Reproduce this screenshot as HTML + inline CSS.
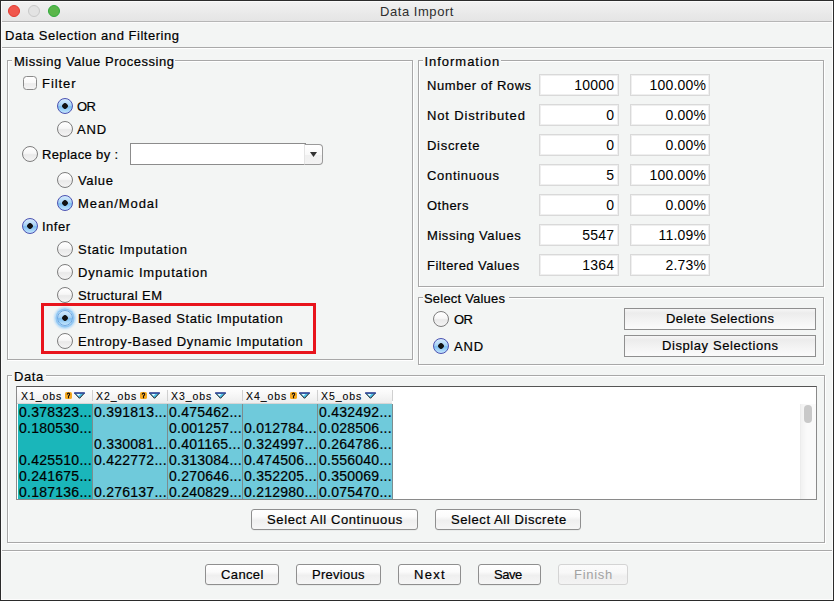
<!DOCTYPE html><html><head><meta charset="utf-8"><style>
*{margin:0;padding:0;box-sizing:border-box}
html,body{width:834px;height:601px;overflow:hidden;background:#f3f5f4}
body{position:relative;font-family:"Liberation Sans",sans-serif;color:#000}
.t{-webkit-text-stroke:0.2px currentColor}
.t.d{-webkit-text-stroke:0}
.t.d2{-webkit-text-stroke:0.2px currentColor}
.t.d3{-webkit-text-stroke:0.08px currentColor}
.t{position:absolute;white-space:pre;line-height:16px;font-size:13px}
.eg{position:absolute;border:1px solid #a8a8a8}
.ew{position:absolute;border:1px solid #ffffff}
.bg{position:absolute;background:#f3f5f4}
.rd{position:absolute;width:16px;height:16px;border-radius:50%;border:1px solid #7d7d7d;
 background:linear-gradient(#ffffff 0%,#f7f7f7 45%,#e9e9e9 55%,#f4f4f4 100%)}
.rd.sel{border-color:#4b52b2;background:radial-gradient(circle at 50% 50%,#111 0,#111 2.5px,transparent 3.1px),linear-gradient(#d4eafc 0%,#a9d4f6 45%,#7dbef1 55%,#c4e6fd 100%)}
.rd.foc{box-shadow:0 0 0 1.5px #8fc6f2,0 0 2px 3px #b9dcf8;border-color:#6ea6e0}
.btn{position:absolute;border:1px solid #8f8f8f;border-radius:3px;
 background:linear-gradient(#ffffff 0%,#fbfbfb 35%,#efefef 55%,#f6f6f6 100%);box-shadow:0 0.5px 0.5px rgba(0,0,0,.08)}
.sbtn{position:absolute;border:1px solid #8f8f8f;border-radius:0;
 background:linear-gradient(#f6f6f6 0%,#ececec 20%,#f3f3f3 55%,#fbfbfb 100%)}
.dbtn{position:absolute;border:1px solid #d4d4d4;border-radius:3px;background:linear-gradient(#fbfbfb,#f8f8f8 40%,#efefef 60%,#f3f3f3)}
.fld{position:absolute;border:1px solid #d9d9d9;background:#fff;box-shadow:inset 0 0 0 1px #efefef}
.num{position:absolute;white-space:pre;line-height:16px;font-size:14px;text-align:right}
</style></head><body>
<div style="position:absolute;left:0;top:0;width:834px;height:22px;background:linear-gradient(#f2f2f2,#e4e4e4)"></div>
<div style="position:absolute;left:0;top:21px;width:834px;height:1px;background:#b6b6b6"></div>
<div style="position:absolute;left:0;top:22px;width:834px;height:1px;background:#fbfbfb"></div>
<div style="position:absolute;left:1px;top:1px;width:832px;height:1px;background:#fafafa"></div>
<div style="position:absolute;left:8px;top:5px;width:12px;height:12px;border-radius:50%;background:#f0564c;border:1px solid #e1392f"></div>
<div style="position:absolute;left:28px;top:5px;width:12px;height:12px;border-radius:50%;background:#e3e3e3;border:1px solid #c9c9c9"></div>
<div style="position:absolute;left:48px;top:5px;width:12px;height:12px;border-radius:50%;background:#5ab64a;border:1px solid #2eab3b"></div>
<div class="t d" style="left:380px;top:4px;letter-spacing:0.55px;font-size:13px;color:#2e2e2e;">Data Import</div>
<div class="t" style="left:5px;top:28px;letter-spacing:0.53px;font-size:13px;">Data Selection and Filtering</div>
<div style="position:absolute;left:1px;top:47px;width:832px;height:1px;background:#a9a9a9"></div>
<div style="position:absolute;left:1px;top:48px;width:832px;height:1px;background:#ffffff"></div>
<div class="ew" style="left:8px;top:61px;width:406px;height:300px"></div>
<div class="eg" style="left:7px;top:60px;width:406px;height:300px"></div>
<div class="bg" style="left:12px;top:60px;width:163px;height:2px"></div>
<div class="t" style="left:14px;top:54px;letter-spacing:0.526px;font-size:13px;">Missing Value Processing</div>
<div style="position:absolute;left:23px;top:76px;width:14px;height:14px;border:1px solid #8a8a8a;border-radius:3.5px;background:linear-gradient(#fff,#f9f9f9 50%,#ececec 55%,#f5f5f5)"></div>
<div class="t" style="left:42px;top:76px;letter-spacing:0.94px;font-size:13px;">Filter</div>
<div class="rd sel" style="left:57px;top:98px"></div>
<div class="t" style="left:77px;top:99px;letter-spacing:-0.5px;font-size:13px;">OR</div>
<div class="rd" style="left:57px;top:121px"></div>
<div class="t" style="left:77px;top:122px;letter-spacing:0.8px;font-size:13px;">AND</div>
<div class="rd" style="left:22px;top:146px"></div>
<div class="t" style="left:42px;top:147px;letter-spacing:0.345px;font-size:13px;">Replace by :</div>
<div style="position:absolute;left:130px;top:143px;width:176px;height:22px;background:#fff;border:1px solid #8c8c8c;border-right:none"></div>
<div style="position:absolute;left:304px;top:144px;width:19px;height:21px;background:linear-gradient(#ffffff,#f9f9f9 50%,#f0f0f0 55%,#f3f3f3);border:1px solid #9a9a9a;border-left:1px solid #e4e4e4;border-radius:0 4px 4px 0"></div>
<svg style="position:absolute;left:310px;top:152px" width="7" height="5"><path d="M0 0H7L3.5 5Z" fill="#333"/></svg>
<div class="rd" style="left:57px;top:172px"></div>
<div class="t" style="left:78px;top:173px;letter-spacing:0.65px;font-size:13px;">Value</div>
<div class="rd sel" style="left:57px;top:195px"></div>
<div class="t" style="left:78px;top:196px;letter-spacing:0.922px;font-size:13px;">Mean/Modal</div>
<div class="rd sel" style="left:22px;top:218px"></div>
<div class="t" style="left:42px;top:219px;letter-spacing:0.5px;font-size:13px;">Infer</div>
<div class="rd" style="left:57px;top:241px"></div>
<div class="t" style="left:78px;top:242px;letter-spacing:0.763px;font-size:13px;">Static Imputation</div>
<div class="rd" style="left:57px;top:264px"></div>
<div class="t" style="left:78px;top:265px;letter-spacing:0.841px;font-size:13px;">Dynamic Imputation</div>
<div class="rd" style="left:57px;top:287px"></div>
<div class="t" style="left:78px;top:288px;letter-spacing:0.442px;font-size:13px;">Structural EM</div>
<div class="rd sel foc" style="left:57px;top:310px"></div>
<div class="t" style="left:78px;top:311px;letter-spacing:0.61px;font-size:13px;">Entropy-Based Static Imputation</div>
<div class="rd" style="left:57px;top:333px"></div>
<div class="t" style="left:78px;top:334px;letter-spacing:0.655px;font-size:13px;">Entropy-Based Dynamic Imputation</div>
<div style="position:absolute;left:41px;top:303px;width:275px;height:51px;border:3px solid #e8141c"></div>
<div class="ew" style="left:419px;top:61px;width:406px;height:227px"></div>
<div class="eg" style="left:418px;top:60px;width:406px;height:227px"></div>
<div class="bg" style="left:423px;top:60px;width:78px;height:2px"></div>
<div class="t" style="left:424.5px;top:54px;letter-spacing:0.97px;font-size:13px;">Information</div>
<div class="t" style="left:427px;top:78px;letter-spacing:0.562px;font-size:13px;">Number of Rows</div>
<div class="fld" style="left:539px;top:74px;width:80px;height:22px"></div>
<div class="fld" style="left:630px;top:74px;width:80px;height:22px"></div>
<div class="num" style="left:539px;top:77px;width:75.2px;letter-spacing:0.2px">10000</div>
<div class="num" style="left:630px;top:77px;width:76.2px;letter-spacing:0.2px">100.00%</div>
<div class="t" style="left:427px;top:108px;letter-spacing:0.85px;font-size:13px;">Not Distributed</div>
<div class="fld" style="left:539px;top:104px;width:80px;height:22px"></div>
<div class="fld" style="left:630px;top:104px;width:80px;height:22px"></div>
<div class="num" style="left:539px;top:107px;width:75.2px;letter-spacing:0.2px">0</div>
<div class="num" style="left:630px;top:107px;width:76.2px;letter-spacing:0.2px">0.00%</div>
<div class="t" style="left:427px;top:138px;letter-spacing:0.7px;font-size:13px;">Discrete</div>
<div class="fld" style="left:539px;top:134px;width:80px;height:22px"></div>
<div class="fld" style="left:630px;top:134px;width:80px;height:22px"></div>
<div class="num" style="left:539px;top:137px;width:75.2px;letter-spacing:0.2px">0</div>
<div class="num" style="left:630px;top:137px;width:76.2px;letter-spacing:0.2px">0.00%</div>
<div class="t" style="left:427px;top:168px;letter-spacing:0.689px;font-size:13px;">Continuous</div>
<div class="fld" style="left:539px;top:164px;width:80px;height:22px"></div>
<div class="fld" style="left:630px;top:164px;width:80px;height:22px"></div>
<div class="num" style="left:539px;top:167px;width:75.2px;letter-spacing:0.2px">5</div>
<div class="num" style="left:630px;top:167px;width:76.2px;letter-spacing:0.2px">100.00%</div>
<div class="t" style="left:427px;top:198px;letter-spacing:0.48px;font-size:13px;">Others</div>
<div class="fld" style="left:539px;top:194px;width:80px;height:22px"></div>
<div class="fld" style="left:630px;top:194px;width:80px;height:22px"></div>
<div class="num" style="left:539px;top:197px;width:75.2px;letter-spacing:0.2px">0</div>
<div class="num" style="left:630px;top:197px;width:76.2px;letter-spacing:0.2px">0.00%</div>
<div class="t" style="left:427px;top:228px;letter-spacing:0.554px;font-size:13px;">Missing Values</div>
<div class="fld" style="left:539px;top:224px;width:80px;height:22px"></div>
<div class="fld" style="left:630px;top:224px;width:80px;height:22px"></div>
<div class="num" style="left:539px;top:227px;width:75.2px;letter-spacing:0.2px">5547</div>
<div class="num" style="left:630px;top:227px;width:76.2px;letter-spacing:0.2px">11.09%</div>
<div class="t" style="left:427px;top:258px;letter-spacing:0.457px;font-size:13px;">Filtered Values</div>
<div class="fld" style="left:539px;top:254px;width:80px;height:22px"></div>
<div class="fld" style="left:630px;top:254px;width:80px;height:22px"></div>
<div class="num" style="left:539px;top:257px;width:75.2px;letter-spacing:0.2px">1364</div>
<div class="num" style="left:630px;top:257px;width:76.2px;letter-spacing:0.2px">2.73%</div>
<div class="ew" style="left:419px;top:298px;width:406px;height:68px"></div>
<div class="eg" style="left:418px;top:297px;width:406px;height:68px"></div>
<div class="bg" style="left:423px;top:297px;width:86px;height:2px"></div>
<div class="t" style="left:424px;top:291px;letter-spacing:0.2px;font-size:13px;">Select Values</div>
<div class="rd" style="left:433px;top:311px"></div>
<div class="t" style="left:454px;top:312px;letter-spacing:-0.5px;font-size:13px;">OR</div>
<div class="rd sel" style="left:433px;top:338px"></div>
<div class="t" style="left:454px;top:339px;letter-spacing:0.8px;font-size:13px;">AND</div>
<div class="sbtn" style="left:624px;top:308px;width:192px;height:22px"></div>
<div class="t" style="left:666px;top:311px;letter-spacing:0.425px;font-size:13px;">Delete Selections</div>
<div class="sbtn" style="left:624px;top:335px;width:192px;height:22px"></div>
<div class="t" style="left:662px;top:338px;letter-spacing:0.58px;font-size:13px;">Display Selections</div>
<div class="ew" style="left:8px;top:376px;width:818px;height:168px"></div>
<div class="eg" style="left:7px;top:375px;width:818px;height:168px"></div>
<div class="bg" style="left:12px;top:375px;width:34px;height:2px"></div>
<div class="t" style="left:14px;top:369px;letter-spacing:0.6px;font-size:13px;">Data</div>
<div style="position:absolute;left:16px;top:386px;width:801px;height:114px;background:#fff;border:1px solid #8a8a8a;border-top-color:#555"></div>
<div style="position:absolute;left:17px;top:387px;width:375px;height:17px;background:linear-gradient(#ffffff,#f9f9f9 40%,#ededed);border-bottom:1px solid #d6d6d6"></div>
<div class="t d3" style="left:21px;top:388px;letter-spacing:0.95px;font-size:10.5px;color:#000;">X1_obs</div>
<svg style="position:absolute;left:65px;top:392px" width="7" height="7"><rect x="0" y="0" width="7" height="7" rx="1.6" fill="#f6a91f"/><path d="M2.4 2.6 A1.15 1.15 0 1 1 4.6 2.6 Q4.6 3.3 3.5 3.9 V6.2" fill="none" stroke="#151010" stroke-width="1.1"/></svg>
<svg style="position:absolute;left:74px;top:392px" width="11" height="8"><path d="M0.5 1 H10.5 L5.5 6.3 Z" fill="#4fc3ea" stroke="#121418" stroke-width="1" stroke-linejoin="round"/><path d="M0 1 H11" stroke="#3d52b8" stroke-width="1.3"/><path d="M2.6 1.9 H6.4 L4.3 4.1Z" fill="#e9fbff"/></svg>
<div style="position:absolute;left:18px;top:404px;width:75px;height:95px;background:#1ab6ba"></div>
<div style="position:absolute;left:92px;top:404px;width:1px;height:95px;background:#7d8c8e"></div>
<div class="t d2" style="left:19px;top:404px;letter-spacing:0.25px;font-size:14px;color:#000;">0.378323...</div>
<div class="t d2" style="left:19px;top:420px;letter-spacing:0.25px;font-size:14px;color:#000;">0.180530...</div>
<div class="t d2" style="left:19px;top:452px;letter-spacing:0.25px;font-size:14px;color:#000;">0.425510...</div>
<div class="t d2" style="left:19px;top:468px;letter-spacing:0.25px;font-size:14px;color:#000;">0.241675...</div>
<div class="t d2" style="left:19px;top:484px;letter-spacing:0.25px;font-size:14px;color:#000;">0.187136...</div>
<div class="t d3" style="left:96px;top:388px;letter-spacing:0.95px;font-size:10.5px;color:#000;">X2_obs</div>
<svg style="position:absolute;left:140px;top:392px" width="7" height="7"><rect x="0" y="0" width="7" height="7" rx="1.6" fill="#f6a91f"/><path d="M2.4 2.6 A1.15 1.15 0 1 1 4.6 2.6 Q4.6 3.3 3.5 3.9 V6.2" fill="none" stroke="#151010" stroke-width="1.1"/></svg>
<svg style="position:absolute;left:149px;top:392px" width="11" height="8"><path d="M0.5 1 H10.5 L5.5 6.3 Z" fill="#4fc3ea" stroke="#121418" stroke-width="1" stroke-linejoin="round"/><path d="M0 1 H11" stroke="#3d52b8" stroke-width="1.3"/><path d="M2.6 1.9 H6.4 L4.3 4.1Z" fill="#e9fbff"/></svg>
<div style="position:absolute;left:92px;top:390px;width:1px;height:11px;background:#d0d0d0"></div>
<div style="position:absolute;left:93px;top:404px;width:75px;height:95px;background:#6fcadb"></div>
<div style="position:absolute;left:167px;top:404px;width:1px;height:95px;background:#7d8c8e"></div>
<div class="t d2" style="left:94px;top:404px;letter-spacing:0.25px;font-size:14px;color:#000;">0.391813...</div>
<div class="t d2" style="left:94px;top:436px;letter-spacing:0.25px;font-size:14px;color:#000;">0.330081...</div>
<div class="t d2" style="left:94px;top:452px;letter-spacing:0.25px;font-size:14px;color:#000;">0.422772...</div>
<div class="t d2" style="left:94px;top:484px;letter-spacing:0.25px;font-size:14px;color:#000;">0.276137...</div>
<div class="t d3" style="left:171px;top:388px;letter-spacing:0.95px;font-size:10.5px;color:#000;">X3_obs</div>
<svg style="position:absolute;left:215px;top:392px" width="11" height="8"><path d="M0.5 1 H10.5 L5.5 6.3 Z" fill="#4fc3ea" stroke="#121418" stroke-width="1" stroke-linejoin="round"/><path d="M0 1 H11" stroke="#3d52b8" stroke-width="1.3"/><path d="M2.6 1.9 H6.4 L4.3 4.1Z" fill="#e9fbff"/></svg>
<div style="position:absolute;left:167px;top:390px;width:1px;height:11px;background:#d0d0d0"></div>
<div style="position:absolute;left:168px;top:404px;width:75px;height:95px;background:#6fcadb"></div>
<div style="position:absolute;left:242px;top:404px;width:1px;height:95px;background:#7d8c8e"></div>
<div class="t d2" style="left:169px;top:404px;letter-spacing:0.25px;font-size:14px;color:#000;">0.475462...</div>
<div class="t d2" style="left:169px;top:420px;letter-spacing:0.25px;font-size:14px;color:#000;">0.001257...</div>
<div class="t d2" style="left:169px;top:436px;letter-spacing:0.25px;font-size:14px;color:#000;">0.401165...</div>
<div class="t d2" style="left:169px;top:452px;letter-spacing:0.25px;font-size:14px;color:#000;">0.313084...</div>
<div class="t d2" style="left:169px;top:468px;letter-spacing:0.25px;font-size:14px;color:#000;">0.270646...</div>
<div class="t d2" style="left:169px;top:484px;letter-spacing:0.25px;font-size:14px;color:#000;">0.240829...</div>
<div class="t d3" style="left:246px;top:388px;letter-spacing:0.95px;font-size:10.5px;color:#000;">X4_obs</div>
<svg style="position:absolute;left:290px;top:392px" width="7" height="7"><rect x="0" y="0" width="7" height="7" rx="1.6" fill="#f6a91f"/><path d="M2.4 2.6 A1.15 1.15 0 1 1 4.6 2.6 Q4.6 3.3 3.5 3.9 V6.2" fill="none" stroke="#151010" stroke-width="1.1"/></svg>
<svg style="position:absolute;left:299px;top:392px" width="11" height="8"><path d="M0.5 1 H10.5 L5.5 6.3 Z" fill="#4fc3ea" stroke="#121418" stroke-width="1" stroke-linejoin="round"/><path d="M0 1 H11" stroke="#3d52b8" stroke-width="1.3"/><path d="M2.6 1.9 H6.4 L4.3 4.1Z" fill="#e9fbff"/></svg>
<div style="position:absolute;left:242px;top:390px;width:1px;height:11px;background:#d0d0d0"></div>
<div style="position:absolute;left:243px;top:404px;width:75px;height:95px;background:#6fcadb"></div>
<div style="position:absolute;left:317px;top:404px;width:1px;height:95px;background:#7d8c8e"></div>
<div class="t d2" style="left:244px;top:420px;letter-spacing:0.25px;font-size:14px;color:#000;">0.012784...</div>
<div class="t d2" style="left:244px;top:436px;letter-spacing:0.25px;font-size:14px;color:#000;">0.324997...</div>
<div class="t d2" style="left:244px;top:452px;letter-spacing:0.25px;font-size:14px;color:#000;">0.474506...</div>
<div class="t d2" style="left:244px;top:468px;letter-spacing:0.25px;font-size:14px;color:#000;">0.352205...</div>
<div class="t d2" style="left:244px;top:484px;letter-spacing:0.25px;font-size:14px;color:#000;">0.212980...</div>
<div class="t d3" style="left:321px;top:388px;letter-spacing:0.95px;font-size:10.5px;color:#000;">X5_obs</div>
<svg style="position:absolute;left:365px;top:392px" width="11" height="8"><path d="M0.5 1 H10.5 L5.5 6.3 Z" fill="#4fc3ea" stroke="#121418" stroke-width="1" stroke-linejoin="round"/><path d="M0 1 H11" stroke="#3d52b8" stroke-width="1.3"/><path d="M2.6 1.9 H6.4 L4.3 4.1Z" fill="#e9fbff"/></svg>
<div style="position:absolute;left:317px;top:390px;width:1px;height:11px;background:#d0d0d0"></div>
<div style="position:absolute;left:318px;top:404px;width:75px;height:95px;background:#6fcadb"></div>
<div style="position:absolute;left:392px;top:404px;width:1px;height:95px;background:#7d8c8e"></div>
<div class="t d2" style="left:319px;top:404px;letter-spacing:0.25px;font-size:14px;color:#000;">0.432492...</div>
<div class="t d2" style="left:319px;top:420px;letter-spacing:0.25px;font-size:14px;color:#000;">0.028506...</div>
<div class="t d2" style="left:319px;top:436px;letter-spacing:0.25px;font-size:14px;color:#000;">0.264786...</div>
<div class="t d2" style="left:319px;top:452px;letter-spacing:0.25px;font-size:14px;color:#000;">0.556040...</div>
<div class="t d2" style="left:319px;top:468px;letter-spacing:0.25px;font-size:14px;color:#000;">0.350069...</div>
<div class="t d2" style="left:319px;top:484px;letter-spacing:0.25px;font-size:14px;color:#000;">0.075470...</div>
<div style="position:absolute;left:392px;top:390px;width:1px;height:11px;background:#d0d0d0"></div>
<div style="position:absolute;left:800px;top:404px;width:16px;height:95px;background:linear-gradient(90deg,#f1f1f1,#fafafa 40%,#fafafa);border-left:1px solid #ececec"></div>
<div style="position:absolute;left:804px;top:405px;width:8px;height:18px;border-radius:4px;background:#c9c9c9"></div>
<div class="btn" style="left:251px;top:509px;width:167px;height:21px"></div>
<div class="t" style="left:267px;top:512px;letter-spacing:0.62px;font-size:13px;">Select All Continuous</div>
<div class="btn" style="left:435px;top:509px;width:146px;height:21px"></div>
<div class="t" style="left:451px;top:512px;letter-spacing:0.58px;font-size:13px;">Select All Discrete</div>
<div style="position:absolute;left:1px;top:550px;width:832px;height:1px;background:#a9a9a9"></div>
<div style="position:absolute;left:1px;top:551px;width:832px;height:1px;background:#ffffff"></div>
<div class="btn" style="left:205px;top:564px;width:74px;height:21px"></div>
<div class="t" style="left:221px;top:567px;letter-spacing:0.38px;font-size:13px;">Cancel</div>
<div class="btn" style="left:296px;top:564px;width:85px;height:21px"></div>
<div class="t" style="left:312px;top:567px;letter-spacing:0.271px;font-size:13px;">Previous</div>
<div class="btn" style="left:398px;top:564px;width:63px;height:21px"></div>
<div class="t" style="left:414px;top:567px;letter-spacing:1.267px;font-size:13px;">Next</div>
<div class="btn" style="left:478px;top:564px;width:63px;height:21px"></div>
<div class="t" style="left:494px;top:567px;letter-spacing:-0.5px;font-size:13px;">Save</div>
<div class="dbtn" style="left:558px;top:564px;width:70px;height:21px"></div>
<div class="t d" style="left:574px;top:567px;letter-spacing:0.7px;font-size:13px;color:#a2a2a2;">Finish</div>
<div style="position:absolute;left:0;top:0;width:834px;height:601px;border:1px solid #2b2b2b;pointer-events:none"></div>
<div style="position:absolute;left:1px;top:1px;width:832px;height:599px;border-right:1px solid #fcfcfc;border-bottom:1px solid #fcfcfc;border-left:1px solid #fbfbfb;pointer-events:none"></div>
</body></html>
